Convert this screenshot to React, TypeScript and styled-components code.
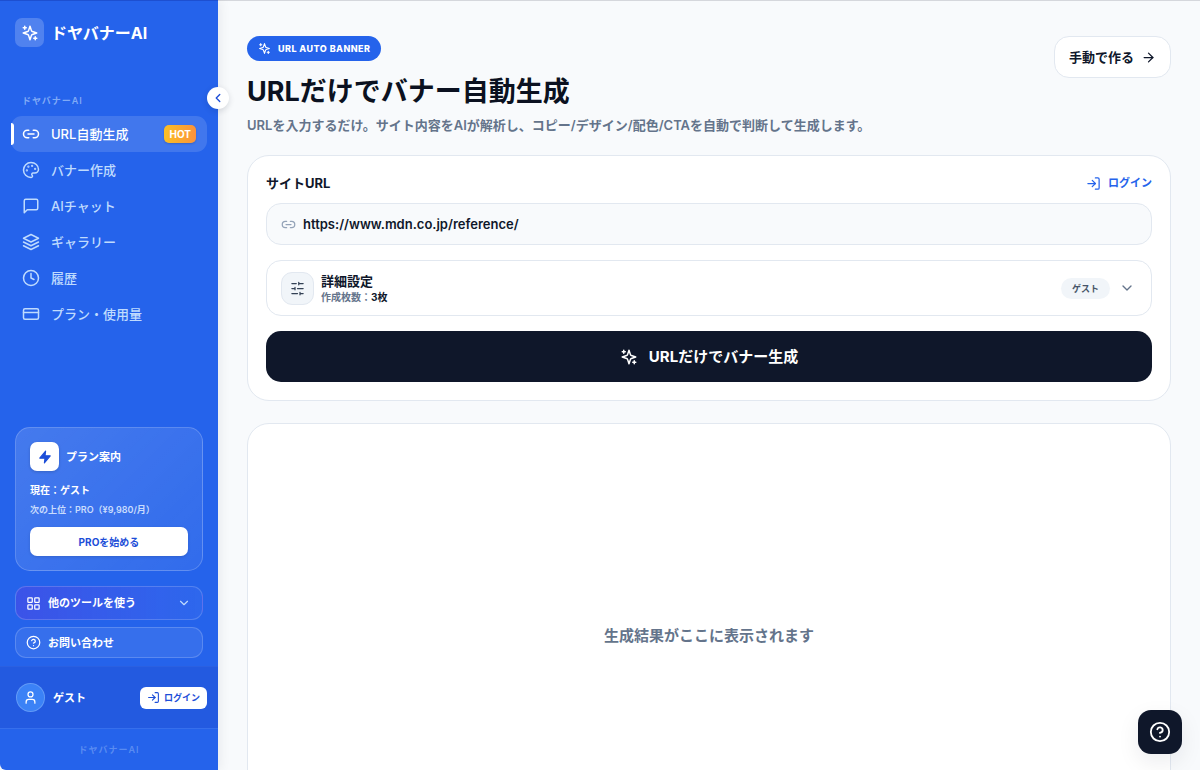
import React from "react";
import styled, { createGlobalStyle, css } from "styled-components";
import {
  ArrowRight,
  ChevronDown,
  ChevronLeft,
  CircleHelp,
  Clock,
  CreditCard,
  LayoutGrid,
  Link2,
  LogIn,
  Palette,
  User,
} from "lucide-react";

const GlobalStyle = createGlobalStyle`
  *, *::before, *::after { box-sizing: border-box; }
  body {
    margin: 0;
    background: #f8fafc;
    color: #0f172a;
    font-family: Inter, "Noto Sans CJK JP", sans-serif;
    font-size: 13px;
    line-height: 20px;
  }
  h1, h2, p { margin: 0; }
  button, input { font: inherit; color: inherit; }
  button { border: 0; padding: 0; background: none; cursor: pointer; }
  a { color: inherit; text-decoration: none; }
  svg { display: block; flex-shrink: 0; }
`;

const Shell = styled.div`
  display: flex;
  height: 100vh;
  border-top: 1px solid #d5d7dc;
`;

/* ---------- Sidebar ---------- */

const Sidebar = styled.aside`
  position: relative;
  z-index: 2;
  display: flex;
  flex-direction: column;
  flex: 0 0 218px;
  background: #2563eb;
  color: #fff;
  border-top: 1px solid #1d4fd0;
  border-bottom-left-radius: 6px;
  box-shadow: 2px 0 12px rgba(15, 23, 42, 0.07);
  margin-top: -1px;
`;

const Brand = styled.a`
  display: flex;
  align-items: center;
  gap: 7px;
  padding: 17px 15px 0;
  font-size: 16px;
  font-weight: 700;
`;

const BrandMark = styled.span`
  display: grid;
  place-items: center;
  width: 29px;
  height: 29px;
  border-radius: 7px;
  background: rgba(255, 255, 255, 0.2);
`;

const CollapseButton = styled.button`
  position: absolute;
  top: 86px;
  right: -11px;
  display: grid;
  place-items: center;
  width: 22px;
  height: 22px;
  border-radius: 50%;
  background: #fff;
  color: #1d4ed8;
  box-shadow: 0 2px 6px rgba(15, 23, 42, 0.14);
`;

const Nav = styled.nav`
  flex: 1;
  padding: 46px 11px 0;
`;

const NavLabel = styled.p`
  padding: 0 11px;
  margin-bottom: 7px;
  font-size: 9px;
  line-height: 16px;
  font-weight: 600;
  letter-spacing: 1px;
  color: rgba(191, 219, 254, 0.6);
`;

const NavItem = styled.a<{ $active?: boolean }>`
  position: relative;
  display: flex;
  align-items: center;
  gap: 11px;
  height: 36px;
  padding: 0 11px;
  border-radius: 11px;
  font-weight: 500;
  color: #bfdbfe;
  ${(p) =>
    p.$active &&
    css`
      background: rgba(255, 255, 255, 0.13);
      color: #fff;
      &::before {
        content: "";
        position: absolute;
        left: 0;
        top: 7px;
        width: 3px;
        height: 22px;
        border-radius: 0 4px 4px 0;
        background: #fff;
      }
    `}
`;

const HotBadge = styled.span`
  margin-left: auto;
  padding: 0 5px;
  border-radius: 5px;
  font-size: 10px;
  line-height: 18px;
  font-weight: 700;
  background: linear-gradient(90deg, #fbbf24, #fb923c);
  box-shadow: 0 1px 2px rgba(15, 23, 42, 0.2);
`;

const SidePanels = styled.div`
  display: flex;
  flex-direction: column;
  gap: 7px;
  padding: 0 15px 8px;
`;

const PlanCard = styled.section`
  display: flex;
  flex-direction: column;
  margin-bottom: 8px;
  padding: 14px;
  border: 1px solid rgba(255, 255, 255, 0.2);
  border-radius: 15px;
  background: linear-gradient(135deg, rgba(255, 255, 255, 0.15), rgba(255, 255, 255, 0.06));
`;

const PlanHead = styled.div`
  display: flex;
  align-items: center;
  gap: 7px;
  margin-bottom: 9px;
`;

const PlanMark = styled.span`
  display: grid;
  place-items: center;
  width: 29px;
  height: 29px;
  border-radius: 7px;
  background: #fff;
  color: #1d4ed8;
  box-shadow: 0 1px 3px rgba(15, 23, 42, 0.2);
`;

const PlanTitle = styled.h2`
  font-size: 11px;
  font-weight: 700;
`;

const PlanCurrent = styled.p`
  font-size: 10px;
  font-weight: 700;
`;

const PlanNext = styled.p`
  font-size: 9px;
  font-weight: 600;
  color: #c9dcfd;
`;

const PlanButton = styled.button`
  height: 29px;
  margin-top: 7px;
  border-radius: 7px;
  background: #fff;
  color: #1d4ed8;
  font-size: 10px;
  font-weight: 700;
  box-shadow: 0 1px 3px rgba(15, 23, 42, 0.15);
`;

const PanelButton = styled.button<{ $tone: "tools" | "contact" }>`
  display: flex;
  align-items: center;
  gap: 7px;
  height: ${(p) => (p.$tone === "tools" ? "34px" : "31px")};
  padding: 0 11px 0 10px;
  border: 1px solid rgba(255, 255, 255, 0.18);
  border-radius: 11px;
  font-size: 11px;
  font-weight: 700;
  background: ${(p) =>
    p.$tone === "tools"
      ? "linear-gradient(90deg, rgba(79, 70, 229, 0.55), rgba(59, 110, 240, 0.4))"
      : "rgba(255, 255, 255, 0.08)"};
  > svg:last-child:not(:first-child) {
    margin-left: auto;
    color: #bfdbfe;
  }
`;

const Account = styled.div`
  display: flex;
  align-items: center;
  gap: 8px;
  height: 62px;
  padding: 0 11px 0 16px;
  border-top: 1px solid rgba(255, 255, 255, 0.04);
  background: #235ae0;
  font-size: 11px;
  font-weight: 700;
`;

const Avatar = styled.span`
  display: grid;
  place-items: center;
  width: 29px;
  height: 29px;
  border: 1px solid rgba(255, 255, 255, 0.2);
  border-radius: 50%;
  background: #3b82f6;
`;

const AccountLogin = styled.a`
  display: flex;
  align-items: center;
  gap: 4px;
  height: 22px;
  margin-left: auto;
  padding: 0 7px;
  border-radius: 6px;
  background: #fff;
  color: #1d4ed8;
  font-size: 9px;
`;

const SideFoot = styled.p`
  height: 42px;
  border-top: 1px solid rgba(255, 255, 255, 0.08);
  font-size: 9px;
  line-height: 42px;
  font-weight: 600;
  letter-spacing: 1px;
  text-align: center;
  color: rgba(191, 219, 254, 0.35);
`;

/* ---------- Main ---------- */

const Main = styled.main`
  flex: 1;
  min-width: 0;
  padding: 35px 29px;
  overflow-y: auto;
  scrollbar-width: none;
`;

const PageHead = styled.header`
  display: flex;
  align-items: flex-start;
  justify-content: space-between;
  margin-bottom: 20px;
`;

const Eyebrow = styled.span`
  display: inline-flex;
  align-items: center;
  gap: 7px;
  height: 25px;
  padding: 0 11px;
  border-radius: 13px;
  background: #2563eb;
  color: #fff;
  font-size: 9px;
  font-weight: 800;
  letter-spacing: 0.05em;
`;

const Title = styled.h1`
  margin-top: 13px;
  font-size: 27px;
  line-height: 36px;
  font-weight: 700;
  color: #0b1120;
`;

const Lead = styled.p`
  margin-top: 5px;
  font-weight: 600;
  color: #64748b;
`;

const ManualLink = styled.a`
  display: flex;
  align-items: center;
  gap: 7px;
  height: 42px;
  padding: 0 14px;
  border: 1px solid #e2e8f0;
  border-radius: 15px;
  background: #fff;
  font-weight: 700;
`;

const Card = styled.section`
  border: 1px solid #e2e8f0;
  border-radius: 22px;
  background: #fff;
`;

const FormCard = styled(Card)`
  display: flex;
  flex-direction: column;
  gap: 15px;
  padding: 17px 18px 18px;
  margin-bottom: 22px;
`;

const FieldHead = styled.div`
  display: flex;
  align-items: center;
  justify-content: space-between;
  margin-bottom: 10px;
  font-weight: 700;
`;

const LoginLink = styled.a`
  display: flex;
  align-items: center;
  gap: 7px;
  color: #2563eb;
  font-size: 11px;
`;

const UrlBox = styled.div`
  display: flex;
  align-items: center;
  gap: 7px;
  height: 42px;
  padding: 0 14px;
  border: 1px solid #e2e8f0;
  border-radius: 15px;
  background: #f8fafc;
  color: #94a3b8;
`;

const UrlInput = styled.input`
  flex: 1;
  min-width: 0;
  padding: 0;
  border: 0;
  outline: 0;
  background: none;
  color: #0f172a;
  font-weight: 600;
`;

const Details = styled.button`
  display: flex;
  align-items: center;
  gap: 7px;
  height: 56px;
  padding: 0 16px 0 14px;
  border: 1px solid #e2e8f0;
  border-radius: 15px;
  background: #fff;
  text-align: left;
`;

const DetailsMark = styled.span`
  display: grid;
  place-items: center;
  width: 33px;
  height: 33px;
  border: 1px solid #e2e8f0;
  border-radius: 11px;
  background: #f1f5f9;
  color: #334155;
`;

const DetailsText = styled.span`
  display: flex;
  flex: 1;
  flex-direction: column;
`;

const DetailsTitle = styled.span`
  line-height: 18px;
  font-weight: 700;
`;

const DetailsNote = styled.span`
  font-size: 10px;
  line-height: 14px;
  font-weight: 600;
  color: #64748b;
  strong { color: #0f172a; font-weight: 700; }
`;

const PlanChip = styled.span`
  padding: 0 11px;
  border-radius: 11px;
  background: #f1f5f9;
  color: #475569;
  font-size: 9px;
  line-height: 21px;
  font-weight: 700;
`;

const Chevron = styled.span`
  margin-left: 2px;
  color: #64748b;
`;

const GenerateButton = styled.button`
  display: flex;
  align-items: center;
  justify-content: center;
  gap: 11px;
  height: 51px;
  border-radius: 15px;
  background: #0f172a;
  color: #fff;
  font-size: 15px;
  font-weight: 700;
`;

const ResultCard = styled(Card)`
  display: grid;
  place-items: center;
  min-height: 426px;
  color: #64748b;
  font-size: 15px;
  font-weight: 700;
`;

const HelpButton = styled.button`
  position: fixed;
  right: 18px;
  bottom: 16px;
  z-index: 3;
  display: grid;
  place-items: center;
  width: 44px;
  height: 44px;
  border-radius: 13px;
  background: #0f172a;
  color: #fff;
  box-shadow: 0 8px 22px rgba(15, 23, 42, 0.08);
`;

/* ---------- Icons ---------- */

const Stroked = ({
  size,
  fill = "none",
  children,
}: {
  size: number;
  fill?: string;
  children: React.ReactNode;
}) => (
  <svg
    width={size}
    height={size}
    viewBox="0 0 24 24"
    fill={fill}
    stroke="currentColor"
    strokeWidth={2}
    strokeLinecap="round"
    strokeLinejoin="round"
    aria-hidden="true"
  >
    {children}
  </svg>
);

const Sparkles = ({ size }: { size: number }) => (
  <Stroked size={size}>
    <path d="m12 3-1.912 5.813a2 2 0 0 1-1.275 1.275L3 12l5.813 1.912a2 2 0 0 1 1.275 1.275L12 21l1.912-5.813a2 2 0 0 1 1.275-1.275L21 12l-5.813-1.912a2 2 0 0 1-1.275-1.275L12 3Z" />
    <path d="M5 3v4M3 5h4M19 17v4M17 19h4" />
  </Stroked>
);

const Bolt = ({ size }: { size: number }) => (
  <Stroked size={size} fill="currentColor">
    <path d="M13 2 3 14h9l-1 8 10-12h-9z" />
  </Stroked>
);

const Message = ({ size }: { size: number }) => (
  <Stroked size={size}>
    <path d="M21 15a2 2 0 0 1-2 2H7l-4 4V5a2 2 0 0 1 2-2h14a2 2 0 0 1 2 2z" />
  </Stroked>
);

const StackedLayers = ({ size }: { size: number }) => (
  <Stroked size={size}>
    <path d="m12 2 10 5-10 5L2 7z" />
    <path d="m2 12 10 5 10-5M2 17l10 5 10-5" />
  </Stroked>
);

const Sliders = ({ size }: { size: number }) => (
  <Stroked size={size}>
    <path d="M21 4h-7M10 4H3M21 12h-9M8 12H3M21 20h-5M12 20H3M14 2v4M8 10v4M16 18v4" />
  </Stroked>
);

const navItems = [
  { label: "URL自動生成", icon: <Link2 size={18} />, active: true },
  { label: "バナー作成", icon: <Palette size={18} /> },
  { label: "AIチャット", icon: <Message size={18} /> },
  { label: "ギャラリー", icon: <StackedLayers size={18} /> },
  { label: "履歴", icon: <Clock size={18} /> },
  { label: "プラン・使用量", icon: <CreditCard size={18} /> },
];

export default function App() {
  return (
    <>
      <GlobalStyle />
      <Shell>
        <Sidebar>
          <Brand href="#">
            <BrandMark>
              <Sparkles size={18} />
            </BrandMark>
            ドヤバナーAI
          </Brand>
          <CollapseButton aria-label="サイドバーを閉じる">
            <ChevronLeft size={14} strokeWidth={2.4} />
          </CollapseButton>
          <Nav>
            <NavLabel>ドヤバナーAI</NavLabel>
            {navItems.map((item) => (
              <NavItem key={item.label} href="#" $active={item.active}>
                {item.icon}
                {item.label}
                {item.active && <HotBadge>HOT</HotBadge>}
              </NavItem>
            ))}
          </Nav>
          <SidePanels>
            <PlanCard>
              <PlanHead>
                <PlanMark>
                  <Bolt size={14} />
                </PlanMark>
                <PlanTitle>プラン案内</PlanTitle>
              </PlanHead>
              <PlanCurrent>現在：ゲスト</PlanCurrent>
              <PlanNext>次の上位：PRO（¥9,980/月）</PlanNext>
              <PlanButton>PROを始める</PlanButton>
            </PlanCard>
            <PanelButton $tone="tools">
              <LayoutGrid size={15} />
              他のツールを使う
              <ChevronDown size={14} />
            </PanelButton>
            <PanelButton $tone="contact">
              <CircleHelp size={15} />
              お問い合わせ
            </PanelButton>
          </SidePanels>
          <Account>
            <Avatar>
              <User size={15} />
            </Avatar>
            ゲスト
            <AccountLogin href="#">
              <LogIn size={13} />
              ログイン
            </AccountLogin>
          </Account>
          <SideFoot>ドヤバナーAI</SideFoot>
        </Sidebar>

        <Main>
          <PageHead>
            <div>
              <Eyebrow>
                <Sparkles size={13} />
                URL AUTO BANNER
              </Eyebrow>
              <Title>URLだけでバナー自動生成</Title>
              <Lead>URLを入力するだけ。サイト内容をAIが解析し、コピー/デザイン/配色/CTAを自動で判断して生成します。</Lead>
            </div>
            <ManualLink href="#">
              手動で作る
              <ArrowRight size={15} />
            </ManualLink>
          </PageHead>

          <FormCard>
            <div>
              <FieldHead>
                <label htmlFor="site-url">サイトURL</label>
                <LoginLink href="#">
                  <LogIn size={15} />
                  ログイン
                </LoginLink>
              </FieldHead>
              <UrlBox>
                <Link2 size={15} />
                <UrlInput id="site-url" type="url" defaultValue="https://www.mdn.co.jp/reference/" />
              </UrlBox>
            </div>
            <Details aria-expanded="false">
              <DetailsMark>
                <Sliders size={15} />
              </DetailsMark>
              <DetailsText>
                <DetailsTitle>詳細設定</DetailsTitle>
                <DetailsNote>
                  作成枚数：<strong>3枚</strong>
                </DetailsNote>
              </DetailsText>
              <PlanChip>ゲスト</PlanChip>
              <Chevron>
                <ChevronDown size={16} />
              </Chevron>
            </Details>
            <GenerateButton>
              <Sparkles size={18} />
              URLだけでバナー生成
            </GenerateButton>
          </FormCard>

          <ResultCard>
            <p>生成結果がここに表示されます</p>
          </ResultCard>
        </Main>
      </Shell>
      <HelpButton aria-label="ヘルプ">
        <CircleHelp size={22} />
      </HelpButton>
    </>
  );
}
